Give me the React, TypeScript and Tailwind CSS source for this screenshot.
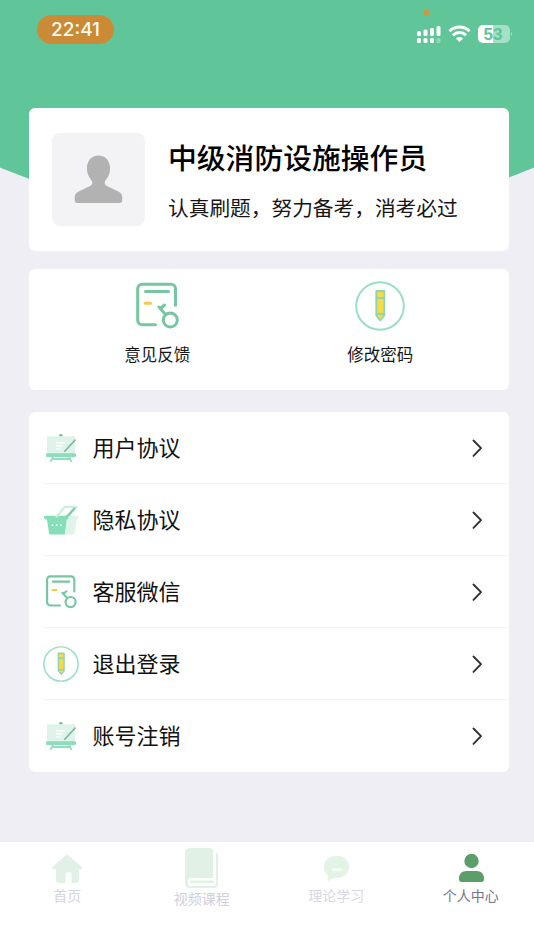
import type { ReactNode } from 'react';

interface IconProps {
  className?: string;
}

function FeedbackIcon({ className = '' }: IconProps) {
  return (
    <svg viewBox="0 0 50 50" fill="none" className={className} aria-hidden="true">
      <path
        d="M23.500 43.800H10.200a4.500 4.500 0 0 1-4.500-4.500V7.700a4.500 4.500 0 0 1 4.500-4.500H39a4.500 4.500 0 0 1 4.500 4.500v16.600"
        stroke="#75c6a1"
        strokeWidth="3"
        strokeLinecap="round"
      />
      <path d="M13.500 10.500h23" stroke="#75c6a1" strokeWidth="3" strokeLinecap="round" />
      <path d="M13.300 22.200h5.200" stroke="#f5c84b" strokeWidth="3" strokeLinecap="round" />
      <path d="m27 26 6.500 7.500M28.500 27.500l4-3.500" stroke="#75c6a1" strokeWidth="3" strokeLinecap="round" />
      <circle cx="38.300" cy="39" r="7" stroke="#75c6a1" strokeWidth="3" />
    </svg>
  );
}

function PencilIcon({ className = '' }: IconProps) {
  return (
    <svg viewBox="0 0 50 50" fill="none" className={className} aria-hidden="true">
      <circle cx="25" cy="25" r="23.800" stroke="#98dfc3" strokeWidth="2" />
      <path
        d="M21.300 10h8v24.500l-4 5-4-5z"
        fill="#f5dc45"
        stroke="#91d4b2"
        strokeWidth="1.900"
        strokeLinejoin="round"
      />
      <path d="M21.300 17h8M21.300 33h8" stroke="#91d4b2" strokeWidth="1.900" />
    </svg>
  );
}

function EaselIcon({ className = '' }: IconProps) {
  return (
    <svg viewBox="0 0 36 36" fill="none" className={className} aria-hidden="true">
      <path d="M16 6.500V5.800a1.900 1.900 0 0 1 3.800 0v.7z" fill="#77b99b" />
      <rect x="4" y="6.300" width="28" height="18" rx="1" fill="#dff3ea" />
      <path d="M13 12.800h9.500M13 15.900h7M13 19h4.500" stroke="#fff" strokeWidth="1.200" />
      <path d="m10.200 26-2.700 5.800M25.800 26l2.700 5.800M9.500 29h17" stroke="#90dfbd" strokeWidth="1.900" />
      <rect x="3" y="23.200" width="30" height="3.800" rx="1.200" fill="#8dddbb" />
      <path d="m22.500 20.500 9.600-10.500" stroke="#78b69d" strokeWidth="1.600" strokeLinecap="round" />
      <path d="m20.800 22.300.9-2.500 1.500 1.300z" fill="#78b69d" />
    </svg>
  );
}

function BasketIcon({ className = '' }: IconProps) {
  return (
    <svg viewBox="0 0 36 36" fill="none" className={className} aria-hidden="true">
      <path d="M23 13.700h12v2.600q0 1-1.500 1.200L31.500 31q-.2 1.500-2 1.500H20z" fill="#dff5ec" />
      <path
        d="M1 14.500q0-.8.800-.8h23.400v2.800l-1.500 1.200-2 14.800H8q-1.800 0-2-1.500L4 17.500q-3 0-3-1.800z"
        fill="#84dfb9"
      />
      <path d="m13 15.200 9-10.400h11.500l-8.500 10" stroke="#caefdf" strokeWidth="2.300" strokeLinejoin="round" />
      <path d="m23.700 15 8.300-9.300" stroke="#82cbae" strokeWidth="2.300" />
      <g fill="#fff">
        <circle cx="9.500" cy="23.200" r=".9" />
        <circle cx="13.700" cy="23.200" r=".9" />
        <circle cx="17.900" cy="23.200" r=".9" />
      </g>
    </svg>
  );
}

function ChevronIcon() {
  return (
    <svg viewBox="0 0 12 20" fill="none" className="h-5 w-3" aria-hidden="true">
      <path d="m2.500 2.500 7.500 7.700-7.500 7.700" stroke="#303030" strokeWidth="1.900" strokeLinecap="round" strokeLinejoin="round" />
    </svg>
  );
}

function StatusBar() {
  return (
    <header className="flex h-[60px] justify-between pl-[37px] pr-[21px]">
      <div className="mt-[15px] flex h-[29px] w-[77px] items-center justify-center rounded-full bg-[#cb8b36] pt-0.5 font-['Inter'] text-[19px] font-medium text-[#fffaf0]">
        22:41
      </div>
      <svg viewBox="0 0 98 48" fill="none" className="h-12 w-[98px]" aria-hidden="true">
        <rect x="8.500" y="10" width="5.500" height="6" rx="1" fill="#c69b45" />
        <g fill="#fff">
          <rect x="2" y="31" width="4" height="5" rx="1.500" />
          <rect x="8.500" y="29.500" width="4" height="6.500" rx="1.500" />
          <rect x="15" y="28" width="4" height="8" rx="1.500" />
          <rect x="21.500" y="26" width="4" height="10" rx="1.500" />
          <rect x="2" y="38" width="4" height="5" rx="1.500" />
          <rect x="8.500" y="38" width="4" height="5" rx="1.500" />
          <rect x="15" y="38" width="4" height="5" rx="1.500" />
          <rect x="21.500" y="38" width="4" height="5" rx="1.500" opacity=".3" />
        </g>
        <path d="M34.500 31.200a14.200 14.200 0 0 1 20 0M38 35.200a9.300 9.300 0 0 1 13 0" stroke="#fff" strokeWidth="3" />
        <path d="M40.900 38.400a5.200 5.200 0 0 1 7.200 0l-3.600 3.600z" fill="#fff" />
        <path d="M68 25h10.500v18H68a5 5 0 0 1-5-5v-8a5 5 0 0 1 5-5z" fill="#fff" />
        <path d="M78.500 25H90a5 5 0 0 1 5 5v8a5 5 0 0 1-5 5H78.500z" fill="#a4dfc7" />
        <path d="M96 32q2.500 2 0 4z" fill="#a4dfc7" />
        <text x="68.500" y="39.800" fill="#60c69a" fontFamily="Liberation Sans, sans-serif" fontSize="17" fontWeight="700">
          53
        </text>
      </svg>
    </header>
  );
}

function ProfileCard() {
  return (
    <section className="mt-12 flex h-[143px] rounded-md bg-white pl-[23.500px]">
      <div className="mt-[25px] flex size-[93px] items-center justify-center rounded-lg bg-[#f3f3f6]">
        <svg viewBox="0 0 50 50" className="size-[49px]" aria-hidden="true">
          <path
            d="M25 .5c7 0 11.800 5.500 11.800 13 0 5.700-2.200 9.300-4.800 12.500-1.400 1.800-.7 4.200 1.200 5.300l12 6c3 1.500 4 3.200 4 6v3.200Q49.200 49 47 49H3Q.8 49 .8 46.500v-3.200c0-2.800 1-4.500 4-6l12-6c1.900-1.100 2.600-3.500 1.200-5.300-2.600-3.200-4.800-6.800-4.800-12.500C13.200 6 18 .5 25 .5z"
            fill="#b2b2b2"
          />
        </svg>
      </div>
      <div className="ml-[23px] whitespace-nowrap text-black">
        <h1 className="mt-[28.500px] text-[28.800px] leading-10 font-medium">中级消防设施操作员</h1>
        <p className="mt-[15.500px] text-[20.700px] leading-[30px] text-[#161616]">认真刷题，努力备考，消考必过</p>
      </div>
    </section>
  );
}

const SHORTCUTS = [
  { label: '意见反馈', icon: <FeedbackIcon className="size-[50px]" /> },
  { label: '修改密码', icon: <PencilIcon className="size-[50px]" /> },
];

function Shortcuts() {
  return (
    <section className="mt-[18px] flex h-[121px] justify-center rounded-md bg-white">
      {SHORTCUTS.map(({ label, icon }) => (
        <button key={label} className="flex w-[223px] flex-col items-center pt-3">
          {icon}
          <span className="mt-[11px] text-[16.500px] leading-6 text-[#161616]">{label}</span>
        </button>
      ))}
    </section>
  );
}

const MENU_ITEMS = [
  { label: '用户协议', icon: <EaselIcon className="size-9" /> },
  { label: '隐私协议', icon: <BasketIcon className="size-9" /> },
  { label: '客服微信', icon: <FeedbackIcon className="size-9" /> },
  { label: '退出登录', icon: <PencilIcon className="size-9" /> },
  { label: '账号注销', icon: <EaselIcon className="size-9" /> },
];

function Menu() {
  return (
    <section className="mt-[22px] rounded-md bg-white pl-3.5">
      {MENU_ITEMS.map(({ label, icon }) => (
        <button
          key={label}
          className="flex h-[72px] w-full items-center border-b border-[#f3f3f4] pr-[26px] text-left last:border-b-0"
        >
          {icon}
          <span className="ml-3.5 flex-1 pb-1 text-[22px] leading-8 text-[#111]">{label}</span>
          <ChevronIcon />
        </button>
      ))}
    </section>
  );
}

interface TabProps {
  label: string;
  color: string;
  padding: string;
  children: ReactNode;
}

function Tab({ label, color, padding, children }: TabProps) {
  return (
    <button className={`flex w-[134.500px] shrink-0 flex-col items-center ${padding}`}>
      {children}
      <span className={`-mt-px text-sm leading-5 ${color}`}>{label}</span>
    </button>
  );
}

function TabBar() {
  return (
    <nav className="mt-auto flex h-[108px] items-start bg-white">
      <Tab label="首页" color="text-[#d4d4df]" padding="pt-[11px]">
        <svg viewBox="0 0 32 33" className="h-[33px] w-8" aria-hidden="true">
          <path
            d="M14.200 2.800q1.800-1.400 3.600 0L30 13.200c1.700 1.700.8 3.300-1 3.300h-1V27q0 3-3 3h-4.500v-8.500q0-2.500-3-2.500t-3 2.500V30H8q-3 0-3-3V16.500H3c-2.200 0-2.700-2-.8-3.500z"
            fill="#e1f1e5"
          />
        </svg>
      </Tab>
      <Tab label="视频课程" color="text-[#d0d0dc]" padding="pt-[5px]">
        <svg viewBox="0 0 34 42" fill="none" className="h-[42px] w-[34px]" aria-hidden="true">
          <path
            d="M5.500 1H25q3 0 3 3v27H5q-2 0-2 2.500V37q0 2 2 2h24q2 0 2-2V7q0-1 1-1t1 1v30q0 4-4 4H5q-5 0-5-5V6q0-5 5.500-5z"
            fill="#e1f1e5"
          />
          <path d="M6 34.800h22" stroke="#e1f1e5" strokeWidth="2.500" strokeLinecap="round" />
        </svg>
      </Tab>
      <Tab label="理论学习" color="text-[#d8d8e2]" padding="pt-[11px]">
        <svg viewBox="0 0 28 33" className="h-[33px] w-7" aria-hidden="true">
          <path
            d="M14.500 3C22 3 27 7.300 27 13.800S22 25 14.500 25q-3 0-4.500.8L7 27.500q-1.500.8-1.300-1l.1-4C3.200 20.500 2 17.500 2 14 2 7.500 7 3 14.500 3z"
            fill="#e1f4e5"
          />
          <rect x="9.500" y="15.500" width="10.500" height="2.200" rx="1.100" fill="#fff" />
        </svg>
      </Tab>
      <Tab label="个人中心" color="text-[#74748b]" padding="pt-[11px]">
        <svg viewBox="0 0 28 33" fill="#5b9e69" className="h-[33px] w-7" aria-hidden="true">
          <circle cx="14.500" cy="8" r="7.200" />
          <path d="M9.500 18h10q7.500 0 7.500 8 0 3-2.500 3h-20Q2 29 2 26q0-8 7.500-8z" />
        </svg>
      </Tab>
    </nav>
  );
}

export default function App() {
  return (
    <div className="relative isolate flex h-[950px] w-[534px] flex-col overflow-hidden bg-[#eeeef4] font-['Noto_Sans_CJK_SC',sans-serif]">
      <div className="absolute -top-[1138px] -left-[413px] -z-10 size-[1360px] rounded-full bg-[#60c69a]" />
      <StatusBar />
      <main className="ml-[28.500px] w-[480.500px]">
        <ProfileCard />
        <Shortcuts />
        <Menu />
      </main>
      <TabBar />
    </div>
  );
}
